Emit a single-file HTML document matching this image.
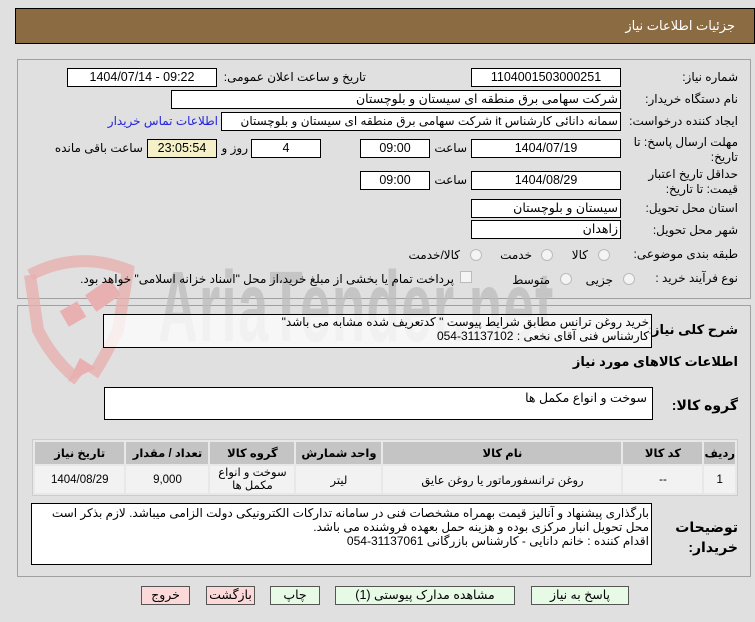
<!DOCTYPE html>
<html><head><meta charset="utf-8">
<style>
*{margin:0;padding:0;box-sizing:border-box}
body{width:755px;height:622px;background:#e0e0e0;font-family:"Liberation Sans","DejaVu Sans",sans-serif;font-size:12px;color:#000;position:relative;overflow:hidden}
.a{position:absolute;white-space:nowrap}
.box{position:absolute;background:#fff;border:1px solid #000;height:19px;line-height:17px;text-align:center;font-size:12.5px;overflow:hidden}
.r{text-align:right;padding-right:2px;direction:rtl}
.lbl{position:absolute;direction:rtl;text-align:right;font-size:12px;white-space:nowrap}
.radio{position:absolute;width:12px;height:12px;border-radius:50%;border:1px solid #bbb;background:#f4f4f4}
.btn{position:absolute;height:19px;border:1px solid #555;background:#e6fae6;text-align:center;line-height:17px;font-size:12.5px}
table{border-collapse:collapse}
th,td{border:2px solid #e8e8e8;text-align:center;font-size:11.5px}
</style></head><body>
<div class="a" style="left:15px;top:8px;width:740px;height:36px;background:#8b6b42;border:1px solid #000"></div>
<div class="lbl" style="right:20px;top:18px;color:#fff;font-size:13px">جزئیات اطلاعات نیاز</div>

<div class="a" style="left:17px;top:59px;width:734px;height:240px;border:1px solid #a0a0a0"></div>
<div class="a" style="left:17px;top:305px;width:734px;height:272px;border:1px solid #a0a0a0"></div>

<!-- watermark -->
<svg class="a" style="left:18px;top:250px" width="130" height="140" viewBox="0 0 130 140">
<path d="M12 25 Q60 0 110 20 L100 80 Q85 110 75 125" fill="none" stroke="#e8b0b0" stroke-width="12" opacity=".8"/>
<path d="M12 25 L20 80 Q35 110 60 130" fill="none" stroke="#e8b0b0" stroke-width="12" opacity=".8"/>
<path d="M50 132 L78 118 L62 108 Z" fill="#e8b0b0"/>
<rect x="45" y="55" width="20" height="18" fill="#e8b0b0" transform="rotate(-30 55 64)"/>
<rect x="70" y="35" width="30" height="20" fill="#e8b0b0" transform="rotate(-35 85 45)"/>
</svg>
<div class="a" style="left:158px;top:250px;font-size:100px;font-weight:bold;color:#bdbdbd;opacity:.75;transform:scaleX(.55);transform-origin:left top;letter-spacing:2px;font-family:'Liberation Sans',sans-serif">AriaTender.net</div>

<div class="lbl" style="right:17px;top:70px">شماره نیاز:</div>
<div class="box" style="left:471px;top:68px;width:150px">1104001503000251</div>
<div class="lbl" style="right:389px;top:70px">تاریخ و ساعت اعلان عمومی:</div>
<div class="box" style="left:67px;top:68px;width:150px">1404/07/14 - 09:22</div>

<div class="lbl" style="right:17px;top:92px">نام دستگاه خریدار:</div>
<div class="box r" style="left:171px;top:90px;width:450px">شرکت سهامی برق منطقه ای سیستان و بلوچستان</div>

<div class="lbl" style="right:17px;top:114px">ایجاد کننده درخواست:</div>
<div class="box r" style="left:221px;top:112px;width:400px;font-size:12px">سمانه دانائی کارشناس it شرکت سهامی برق منطقه ای سیستان و بلوچستان</div>
<div class="lbl" style="right:537px;top:114px;color:#2222dd">اطلاعات تماس خریدار</div>

<div class="lbl" style="right:17px;top:135px;line-height:15px">مهلت ارسال پاسخ: تا<br>تاریخ:</div>
<div class="box" style="left:471px;top:139px;width:150px">1404/07/19</div>
<div class="lbl" style="right:288px;top:141px">ساعت</div>
<div class="box" style="left:360px;top:139px;width:70px">09:00</div>
<div class="box" style="left:251px;top:139px;width:70px">4</div>
<div class="lbl" style="right:507px;top:141px">روز و</div>
<div class="box" style="left:147px;top:139px;width:70px;background:#f5f0c8">23:05:54</div>
<div class="lbl" style="right:612px;top:141px">ساعت باقی مانده</div>

<div class="lbl" style="right:17px;top:167px;line-height:15px">حداقل تاریخ اعتبار<br>قیمت: تا تاریخ:</div>
<div class="box" style="left:471px;top:171px;width:150px">1404/08/29</div>
<div class="lbl" style="right:288px;top:173px">ساعت</div>
<div class="box" style="left:360px;top:171px;width:70px">09:00</div>

<div class="lbl" style="right:17px;top:201px">استان محل تحویل:</div>
<div class="box r" style="left:471px;top:199px;width:150px">سیستان و بلوچستان</div>
<div class="lbl" style="right:17px;top:223px">شهر محل تحویل:</div>
<div class="box r" style="left:471px;top:220px;width:150px">زاهدان</div>

<div class="lbl" style="right:17px;top:247px">طبقه بندی موضوعی:</div>
<div class="radio" style="left:598px;top:249px"></div>
<div class="lbl" style="right:167px;top:248px">کالا</div>
<div class="radio" style="left:541px;top:249px"></div>
<div class="lbl" style="right:223px;top:248px">خدمت</div>
<div class="radio" style="left:470px;top:249px"></div>
<div class="lbl" style="right:295px;top:248px">کالا/خدمت</div>

<div class="lbl" style="right:17px;top:271px">نوع فرآیند خرید :</div>
<div class="radio" style="left:623px;top:273px"></div>
<div class="lbl" style="right:142px;top:273px">جزیی</div>
<div class="radio" style="left:560px;top:273px"></div>
<div class="lbl" style="right:205px;top:273px">متوسط</div>
<div class="a" style="left:460px;top:271px;width:12px;height:12px;border:1px solid #bbb;background:#f4f4f4"></div>
<div class="lbl" style="right:301px;top:272px">پرداخت تمام یا بخشی از مبلغ خرید،از محل "اسناد خزانه اسلامی" خواهد بود.</div>

<div class="lbl" style="right:17px;top:322px;font-weight:bold;font-size:13px">شرح کلی نیاز:</div>
<div class="a" style="left:103px;top:314px;width:549px;height:34px;border:1px solid #000;background:rgba(255,255,255,.75);direction:rtl;text-align:right;padding-right:2px;font-size:12px;line-height:14px">خرید روغن ترانس مطابق شرایط پیوست " کدتعریف شده مشابه می باشد"<br>کارشناس فنی آقای نخعی : 31137102-054</div>
<div class="lbl" style="right:17px;top:354px;font-weight:bold;font-size:13px">اطلاعات کالاهای مورد نیاز</div>

<div class="lbl" style="right:17px;top:397px;font-weight:bold;font-size:14px">گروه کالا:</div>
<div class="a" style="left:104px;top:387px;width:549px;height:33px;border:1px solid #000;background:#fff;direction:rtl;text-align:right;padding:2px 5px;font-size:12.5px">سوخت و انواع مکمل ها</div>

<div class="a" style="left:32px;top:439px;width:706px;height:57px;background:#e8e8e8;border:1px solid #ccc">
<table style="width:704px;direction:rtl;height:55px">
<tr style="background:#c4c4c4;height:24px"><th style="width:29px">ردیف</th><th style="width:81px">کد کالا</th><th style="width:240px">نام کالا</th><th style="width:87px">واحد شمارش</th><th style="width:86px">گروه کالا</th><th style="width:84px">تعداد / مقدار</th><th>تاریخ نیاز</th></tr>
<tr style="background:#f2f2f2"><td>1</td><td>--</td><td>روغن ترانسفورماتور یا روغن عایق</td><td>لیتر</td><td style="line-height:13px">سوخت و انواع<br>مکمل ها</td><td>9,000</td><td>1404/08/29</td></tr>
</table></div>

<div class="lbl" style="right:17px;top:517px;font-weight:bold;line-height:20px;font-size:14px">توضیحات<br>خریدار:</div>
<div class="a" style="left:31px;top:503px;width:621px;height:62px;border:1px solid #000;background:#fff;direction:rtl;text-align:right;padding:2px 2px;font-size:12px;line-height:14px;white-space:normal">بارگذاری پیشنهاد و آنالیز قیمت بهمراه مشخصات فنی در سامانه تدارکات الکترونیکی دولت الزامی میباشد. لازم بذکر است محل تحویل انبار مرکزی بوده و هزینه حمل بعهده فروشنده می باشد.<br>اقدام کننده : خانم دانایی - کارشناس بازرگانی 31137061-054</div>

<div class="btn" style="left:531px;top:586px;width:98px">پاسخ به نیاز</div>
<div class="btn" style="left:335px;top:586px;width:180px">مشاهده مدارک پیوستی (1)</div>
<div class="btn" style="left:270px;top:586px;width:50px">چاپ</div>
<div class="btn" style="left:206px;top:586px;width:49px;background:#fbd9d9">بازگشت</div>
<div class="btn" style="left:141px;top:586px;width:49px;background:#fbd9d9">خروج</div>
</body></html>
